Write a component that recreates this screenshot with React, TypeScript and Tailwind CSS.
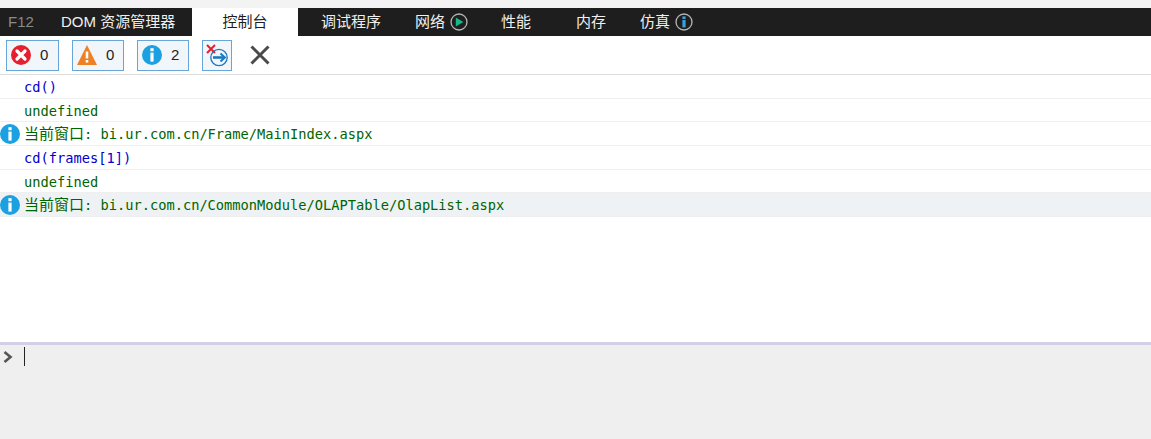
const UI_FONT = "font-['Liberation_Sans','Noto_Sans_CJK_SC',sans-serif]";

function ErrorIcon() {
  return (
    <svg width="22" height="22" viewBox="0 0 22 22">
      <circle cx="11" cy="11" r="10" fill="#e5202e" />
      <path d="M7 7l8 8M15 7l-8 8" stroke="#fff" strokeWidth="3.2" strokeLinecap="round" />
    </svg>
  );
}

function WarnIcon() {
  return (
    <svg width="22" height="22" viewBox="0 0 22 22">
      <path d="M11 1L21 21H1Z" fill="#ed8123" />
      <path d="M11 7.5v7" stroke="#fff" strokeWidth="2.6" />
      <rect x="9.7" y="16" width="2.6" height="2.6" fill="#fff" />
    </svg>
  );
}

function InfoIcon({ size = 20 }: { size?: number }) {
  return (
    <svg width={size} height={size} viewBox="0 0 20 20">
      <circle cx="10" cy="10" r="10" fill="#1ba1e2" />
      <rect x="8.4" y="3.2" width="3.2" height="3" fill="#fff" />
      <rect x="8.4" y="7.6" width="3.2" height="9" fill="#fff" />
    </svg>
  );
}

function ClearOnNavIcon() {
  return (
    <svg width="24" height="24" viewBox="0 0 24 24">
      <circle cx="14" cy="14.5" r="8.2" fill="none" stroke="#1c78c0" strokeWidth="1.3" />
      <path d="M8 14.5h11" stroke="#1c78c0" strokeWidth="2.6" />
      <path d="M15.5 10.5l4.4 4-4.4 4" fill="none" stroke="#1c78c0" strokeWidth="2" />
      <path d="M2 2l8 8M10 2l-8 8" stroke="#e5202e" strokeWidth="2" />
    </svg>
  );
}

function CountButton({ icon, count, width }: { icon: React.ReactNode; count: number; width: string }) {
  return (
    <div className={`${width} h-[31px] flex items-center pl-[3px] border border-[#6aa5d8] bg-[#f1f6fb]`}>
      <span className="w-[22px] flex justify-center">{icon}</span>
      <span className="ml-[8px] text-[15px] text-[#222]">{count}</span>
    </div>
  );
}

function TabStatus({ kind }: { kind: "play" | "info" }) {
  return (
    <svg width="18" height="18" viewBox="0 0 18 18" className="ml-[5px]">
      <circle cx="9" cy="9" r="8" fill="#1e1e1e" stroke="#b9b5b5" strokeWidth="1.3" />
      {kind === "play" ? (
        <path d="M5.8 4.4L13.4 9l-7.6 4.6Z" fill="#14b88a" />
      ) : (
        <>
          <rect x="7.4" y="3.4" width="3.2" height="2.6" fill="#3aa0d8" />
          <rect x="7.4" y="7" width="3.2" height="7.4" fill="#3aa0d8" />
        </>
      )}
    </svg>
  );
}

const rows = [
  { text: "cd()", color: "text-[#0000cd]" },
  { text: "undefined", color: "text-[#006400]" },
  { prefix: "当前窗口", text: ": bi.ur.com.cn/Frame/MainIndex.aspx", color: "text-[#006400]", info: true },
  { text: "cd(frames[1])", color: "text-[#0000cd]" },
  { text: "undefined", color: "text-[#006400]" },
  { prefix: "当前窗口", text: ": bi.ur.com.cn/CommonModule/OLAPTable/OlapList.aspx", color: "text-[#006400]", info: true, active: true },
];

export default function App() {
  return (
    <div className={`w-[1151px] h-[439px] flex flex-col overflow-hidden bg-white ${UI_FONT}`}>
      <div className="h-2 shrink-0 bg-[#f3f3f3]" />

      <div className="h-[28px] shrink-0 flex items-center bg-[#1e1e1e] text-[15px] text-[#f0f0f0]">
        <span className="ml-[8px] w-[53px] text-[#8a8a8a]">F12</span>
        <span className="w-[131px]">DOM 资源管理器</span>
        <span className="w-[106px] h-full flex items-center justify-center bg-white text-[#1e1e1e]">控制台</span>
        <span className="ml-[23px] w-[94px]">调试程序</span>
        <span className="w-[86px] flex items-center">
          网络
          <TabStatus kind="play" />
        </span>
        <span className="w-[75px]">性能</span>
        <span className="w-[64px]">内存</span>
        <span className="flex items-center">
          仿真
          <TabStatus kind="info" />
        </span>
      </div>

      <div className="h-[39px] shrink-0 flex items-center gap-[13px] pl-[6px] border-b border-[#dcdcdc]">
        <CountButton icon={<ErrorIcon />} count={0} width="w-[53px]" />
        <CountButton icon={<WarnIcon />} count={0} width="w-[52px]" />
        <CountButton icon={<InfoIcon />} count={2} width="w-[52px]" />
        <div className="w-[30px] h-[31px] flex items-center justify-center border border-[#6aa5d8] bg-[#f1f6fb]">
          <ClearOnNavIcon />
        </div>
        <svg width="20" height="20" viewBox="0 0 20 20" className="ml-[5px]">
          <path d="M1.5 1.5l17 17M18.5 1.5l-17 17" stroke="#4a4a4a" strokeWidth="3" />
        </svg>
      </div>

      <div className="flex-1 min-h-0 font-['DejaVu_Sans_Mono','Noto_Sans_CJK_SC',monospace] text-[13.7px]">
        {rows.map((row, i) => (
          <div
            key={i}
            className={`h-[23.7px] flex items-center pl-[24px] pt-[1.5px] relative border-b border-[#efefef] whitespace-pre ${row.color} ${row.active ? "bg-[#eef2f5]" : ""}`}
          >
            {row.info && (
              <span className="absolute left-0 top-[2px]">
                <InfoIcon />
              </span>
            )}
            {row.prefix && <span className="text-[15px]">{row.prefix}</span>}
            {row.text}
          </div>
        ))}
      </div>

      <div className="h-[97px] shrink-0 flex items-start bg-[#efefef] border-t-[3px] border-[#d2d0e6]">
        <svg width="12" height="14" viewBox="0 0 12 14" className="ml-[2px] mt-[5px]">
          <path d="M2.5 2l6 5-6 5" fill="none" stroke="#555" strokeWidth="2.6" />
        </svg>
        <div className="ml-[10px] mt-[2px] w-px h-[19px] bg-[#222]" />
      </div>
    </div>
  );
}
